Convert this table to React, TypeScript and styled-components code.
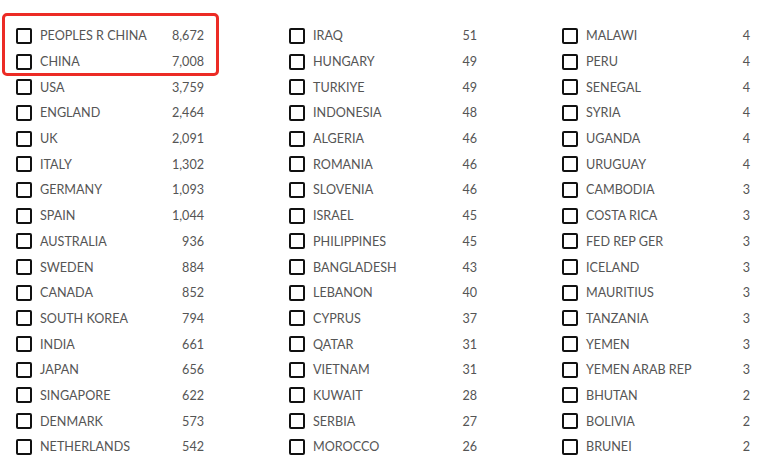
import React from 'react';
import styled, { createGlobalStyle } from 'styled-components';

const GlobalStyle = createGlobalStyle`
  body {
    margin: 0;
    background: #ffffff;
    font-family: 'Lato', 'Liberation Sans', sans-serif;
  }
`;

const Page = styled.div`
  position: relative;
  width: 774px;
  height: 465px;
  overflow: hidden;
  background: #ffffff;
`;

const Grid = styled.div`
  display: grid;
  grid-template-columns: repeat(3, 188px);
  column-gap: 85px;
  padding: 23px 0 0 16px;
`;

const Column = styled.div`
  display: flex;
  flex-direction: column;
`;

const Row = styled.label`
  display: flex;
  align-items: center;
  height: 25.7px;
  font-size: 12.6px;
  color: #555555;
  cursor: pointer;
`;

const Box = styled.span`
  box-sizing: border-box;
  width: 16px;
  height: 16px;
  border: 2px solid #111111;
  border-radius: 2px;
  margin-right: 8px;
  flex: none;
`;

const Name = styled.span`
  flex: 1;
  white-space: nowrap;
`;

const Count = styled.span`
  text-align: right;
`;

const Highlight = styled.div`
  position: absolute;
  left: 2px;
  top: 13px;
  width: 211px;
  height: 57px;
  border: 3px solid #ec2b25;
  border-radius: 5px;
  pointer-events: none;
`;

type Item = [string, string];

const columns: Item[][] = [
  [
    ['PEOPLES R CHINA', '8,672'],
    ['CHINA', '7,008'],
    ['USA', '3,759'],
    ['ENGLAND', '2,464'],
    ['UK', '2,091'],
    ['ITALY', '1,302'],
    ['GERMANY', '1,093'],
    ['SPAIN', '1,044'],
    ['AUSTRALIA', '936'],
    ['SWEDEN', '884'],
    ['CANADA', '852'],
    ['SOUTH KOREA', '794'],
    ['INDIA', '661'],
    ['JAPAN', '656'],
    ['SINGAPORE', '622'],
    ['DENMARK', '573'],
    ['NETHERLANDS', '542'],
  ],
  [
    ['IRAQ', '51'],
    ['HUNGARY', '49'],
    ['TURKIYE', '49'],
    ['INDONESIA', '48'],
    ['ALGERIA', '46'],
    ['ROMANIA', '46'],
    ['SLOVENIA', '46'],
    ['ISRAEL', '45'],
    ['PHILIPPINES', '45'],
    ['BANGLADESH', '43'],
    ['LEBANON', '40'],
    ['CYPRUS', '37'],
    ['QATAR', '31'],
    ['VIETNAM', '31'],
    ['KUWAIT', '28'],
    ['SERBIA', '27'],
    ['MOROCCO', '26'],
  ],
  [
    ['MALAWI', '4'],
    ['PERU', '4'],
    ['SENEGAL', '4'],
    ['SYRIA', '4'],
    ['UGANDA', '4'],
    ['URUGUAY', '4'],
    ['CAMBODIA', '3'],
    ['COSTA RICA', '3'],
    ['FED REP GER', '3'],
    ['ICELAND', '3'],
    ['MAURITIUS', '3'],
    ['TANZANIA', '3'],
    ['YEMEN', '3'],
    ['YEMEN ARAB REP', '3'],
    ['BHUTAN', '2'],
    ['BOLIVIA', '2'],
    ['BRUNEI', '2'],
  ],
];

export default function App() {
  return (
    <Page>
      <GlobalStyle />
      <Grid>
        {columns.map((col, i) => (
          <Column key={i}>
            {col.map(([name, count]) => (
              <Row key={name}>
                <Box />
                <Name>{name}</Name>
                <Count>{count}</Count>
              </Row>
            ))}
          </Column>
        ))}
      </Grid>
      <Highlight />
    </Page>
  );
}
